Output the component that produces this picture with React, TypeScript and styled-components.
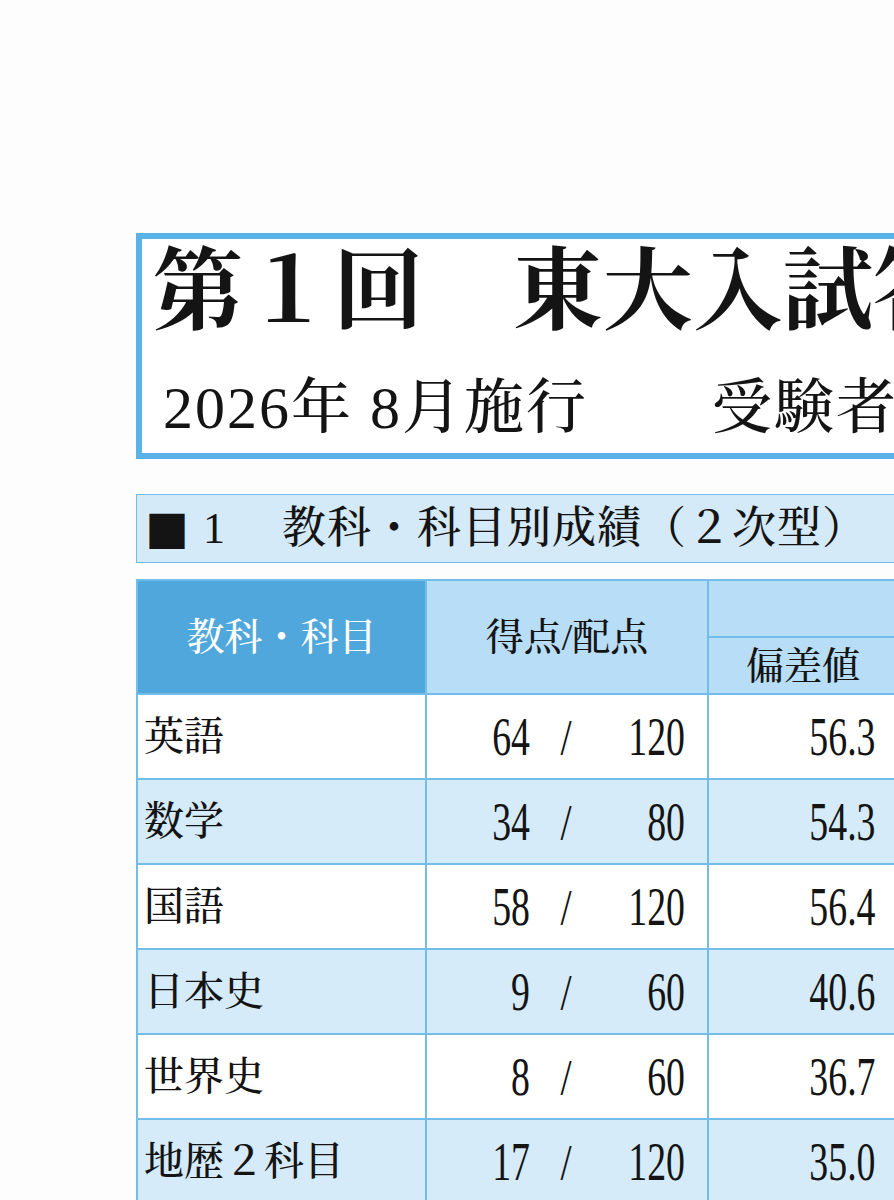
import React from "react";
import styled, { createGlobalStyle } from "styled-components";

const FONT = `"Liberation Serif", "Noto Serif CJK JP", "Noto Sans CJK JP", serif`;
const LINE = "#72bdea";

const GlobalStyle = createGlobalStyle`
  html, body { margin: 0; padding: 0; background: #fdfdfd; overflow: hidden; }
  body { font-family: ${FONT}; color: #141414; }
`;

const Page = styled.div`
  width: 894px;
  height: 1200px;
  overflow: hidden;
  box-sizing: border-box;
  padding: 233px 0 0 136px;
`;

const Sheet = styled.div`
  width: 980px;
  display: flex;
  flex-direction: column;
`;

const TitleBox = styled.header`
  box-sizing: border-box;
  height: 226px;
  border: 6px solid #5ab3e6;
  background: #ffffff;
  padding: 8px 0 0 11px;
  display: flex;
  flex-direction: column;
`;

const MainTitle = styled.h1`
  margin: 0;
  font-size: 90px;
  line-height: 90px;
  font-weight: 700;
  white-space: nowrap;
`;

const SubTitle = styled.p`
  margin: 41px 0 0 10px;
  font-size: 60px;
  line-height: 60px;
  font-weight: 500;
  letter-spacing: 2px;
  white-space: nowrap;
`;

const SectionHead = styled.h2`
  box-sizing: border-box;
  margin: 35px 0 0;
  height: 69px;
  border: 1.5px solid ${LINE};
  background: #d4eaf9;
  display: flex;
  align-items: center;
  padding-left: 8px;
  font-size: 44px;
  font-weight: 500;
  white-space: nowrap;
`;

const Marker = styled.span`
  font-family: "Noto Sans CJK JP", sans-serif;
  line-height: 1;
`;

const SectionIndex = styled.span`
  margin-left: 14px;
  line-height: 1;
`;

const SectionLabel = styled.span`
  margin-left: 57px;
  letter-spacing: 1px;
  line-height: 1;
`;

const Table = styled.table`
  margin-top: 16px;
  border-collapse: collapse;
  table-layout: fixed;
  width: 951px;
`;

const HeadCell = styled.th<{ $tone: "dark" | "light" }>`
  border: 2px solid ${LINE};
  background: ${(p) => (p.$tone === "dark" ? "#4fa7dc" : "#b8ddf6")};
  color: ${(p) => (p.$tone === "dark" ? "#ffffff" : "#141414")};
  font-weight: 500;
  font-size: 38px;
  line-height: 1;
  text-align: center;
  vertical-align: middle;
  padding: 0;
  height: 55px;
  white-space: nowrap;
`;

const Row = styled.tr<{ $alt: boolean }>`
  background: ${(p) => (p.$alt ? "#d5ebfa" : "#ffffff")};
`;

const Cell = styled.td`
  border: 2px solid ${LINE};
  height: 83px;
  padding: 0;
  vertical-align: middle;
  white-space: nowrap;
`;

const LabelCell = styled(Cell)`
  padding-left: 6px;
  font-size: 40px;
  font-weight: 500;
  line-height: 1;
`;

const NumCell = styled(Cell)`
  text-align: right;
  padding-right: 22px;
`;

const Fraction = styled.span`
  display: inline-flex;
  align-items: center;
`;

const Slot = styled.span<{ $w: number }>`
  display: inline-block;
  width: ${(p) => p.$w}px;
  text-align: right;
`;

const Num = styled.span`
  display: inline-block;
  font-family: "Liberation Serif", serif;
  font-size: 54px;
  line-height: 1;
  transform: scaleX(0.7);
  transform-origin: right center;
`;

const Slash = styled.span`
  display: inline-block;
  width: 72px;
  text-align: center;
  font-family: "Liberation Serif", serif;
  font-size: 50px;
  line-height: 1;
  transform: scaleX(0.8);
`;

type Score = { name: string; got: number; max: number; dev: string; rank: string };

const scores: Score[] = [
  { name: "英語", got: 64, max: 120, dev: "56.3", rank: "812" },
  { name: "数学", got: 34, max: 80, dev: "54.3", rank: "1104" },
  { name: "国語", got: 58, max: 120, dev: "56.4", rank: "798" },
  { name: "日本史", got: 9, max: 60, dev: "40.6", rank: "2310" },
  { name: "世界史", got: 8, max: 60, dev: "36.7", rank: "2541" },
  { name: "地歴２科目", got: 17, max: 120, dev: "35.0", rank: "2688" },
  { name: "総合", got: 173, max: 440, dev: "51.2", rank: "1320" },
];

export default function App() {
  return (
    <>
      <GlobalStyle />
      <Page>
        <Sheet>
          <TitleBox>
            <MainTitle>第１回　東大入試答練模試</MainTitle>
            <SubTitle>2026年 8月施行　　受験者数 3,215名</SubTitle>
          </TitleBox>

          <SectionHead>
            <Marker>■</Marker>
            <SectionIndex>1</SectionIndex>
            <SectionLabel>教科・科目別成績（２次型）</SectionLabel>
          </SectionHead>

          <Table>
            <colgroup>
              <col style={{ width: 289 }} />
              <col style={{ width: 282 }} />
              <col style={{ width: 190 }} />
              <col style={{ width: 190 }} />
            </colgroup>
            <thead>
              <tr>
                <HeadCell $tone="dark" rowSpan={2}>教科・科目</HeadCell>
                <HeadCell $tone="light" rowSpan={2}>得点/配点</HeadCell>
                <HeadCell $tone="light" colSpan={2}></HeadCell>
              </tr>
              <tr>
                <HeadCell $tone="light">偏差値</HeadCell>
                <HeadCell $tone="light">順位</HeadCell>
              </tr>
            </thead>
            <tbody>
              {scores.map((s, i) => (
                <Row key={s.name} $alt={i % 2 === 1}>
                  <LabelCell>{s.name}</LabelCell>
                  <NumCell>
                    <Fraction>
                      <Slot $w={70}>
                        <Num>{s.got}</Num>
                      </Slot>
                      <Slash>/</Slash>
                      <Slot $w={83}>
                        <Num>{s.max}</Num>
                      </Slot>
                    </Fraction>
                  </NumCell>
                  <NumCell>
                    <Num>{s.dev}</Num>
                  </NumCell>
                  <NumCell>
                    <Num>{s.rank}</Num>
                  </NumCell>
                </Row>
              ))}
            </tbody>
          </Table>
        </Sheet>
      </Page>
    </>
  );
}
